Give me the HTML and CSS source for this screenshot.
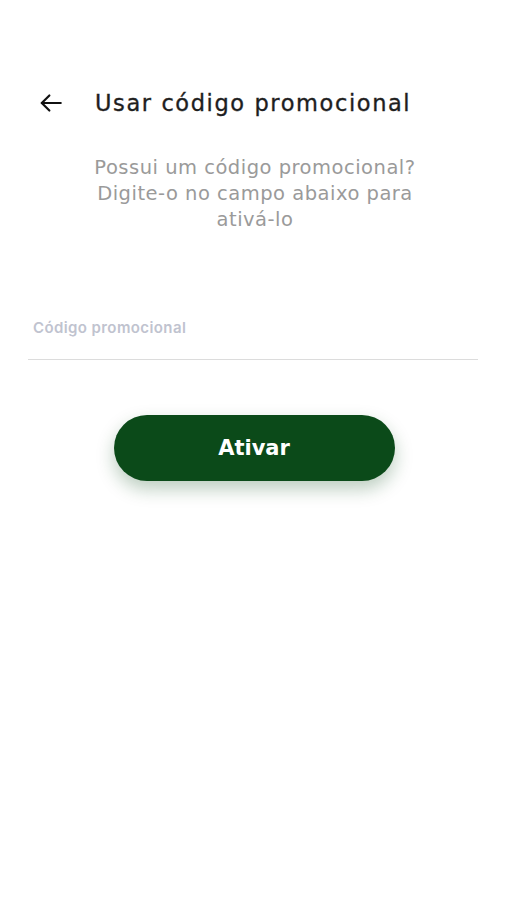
FILE: index.html
```html
<!DOCTYPE html>
<html lang="pt">
<head>
    <meta charset="UTF-8">
    <meta name="viewport" content="width=device-width, initial-scale=1.0">
    <title>Usar código promocional</title>
    <link rel="stylesheet" href="styles.css">
</head>
<body>
    <div class="screen">
        <div class="header">
            <button class="back" type="button" aria-label="Voltar">
                <svg width="26" height="26" viewBox="0 0 24 24" fill="none" stroke="#111" stroke-width="2" stroke-linecap="round" stroke-linejoin="round">
                    <line x1="21" y1="12" x2="3.5" y2="12"/>
                    <polyline points="10.5 5 3.5 12 10.5 19"/>
                </svg>
            </button>
            <h1>Usar código promocional</h1>
        </div>

        <p class="intro">Possui um código promocional?<br>Digite-o no campo abaixo para<br>ativá-lo</p>

        <div class="field">
            <label for="promo">Código promocional</label>
            <input type="text" id="promo" name="promo">
        </div>

        <div class="actions">
            <button class="activate" type="button">Ativar</button>
        </div>
    </div>
</body>
</html>
```

FILE: styles.css
```css
html, body {
    margin: 0;
    background: #fff;
    font-family: "DejaVu Sans", "Noto Sans", sans-serif;
}
.screen {
    min-height: 900px;
    box-sizing: border-box;
    padding: 87px 28px 40px;
}
.header {
    display: flex;
    align-items: center;
    height: 32px;
}
.back {
    background: none;
    border: none;
    padding: 0;
    margin-left: 10px;
    width: 26px;
    height: 26px;
    cursor: pointer;
}
.back svg {
    display: block;
}
h1 {
    margin: 0 0 0 31px;
    font-size: 22.5px;
    font-weight: 400;
    color: #1e1e1e;
    letter-spacing: 1.6px;
    white-space: nowrap;
    -webkit-text-stroke: 0.35px #1e1e1e;
}
.intro {
    margin: 36px 0 0;
    text-align: center;
    font-size: 19.5px;
    line-height: 26px;
    color: #9a9a9a;
    padding-left: 4px;
    letter-spacing: 0.5px;
    white-space: nowrap;
}
.field {
    margin-top: 85px;
}
label {
    display: block;
    margin-left: 5px;
    font-family: Inter, Roboto, sans-serif;
    font-size: 15px;
    font-weight: 600;
    letter-spacing: 0.4px;
    color: #c0c3cf;
}
input {
    display: block;
    width: 100%;
    border: none;
    border-bottom: 1px solid #dcdcdc;
    height: 21px;
    padding: 0;
    margin-top: 2px;
    box-sizing: border-box;
    outline: none;
}
.actions {
    display: flex;
    justify-content: center;
    margin-top: 55px;
}
.activate {
    width: 281px;
    height: 66px;
    margin-left: 2px;
    border: none;
    border-radius: 33px;
    background: #0b4a19;
    color: #fff;
    font-family: "DejaVu Sans", sans-serif;
    font-size: 21px;
    font-weight: 700;
    box-shadow: 0 8px 18px rgba(11, 74, 25, 0.28);
    cursor: pointer;
}
```
